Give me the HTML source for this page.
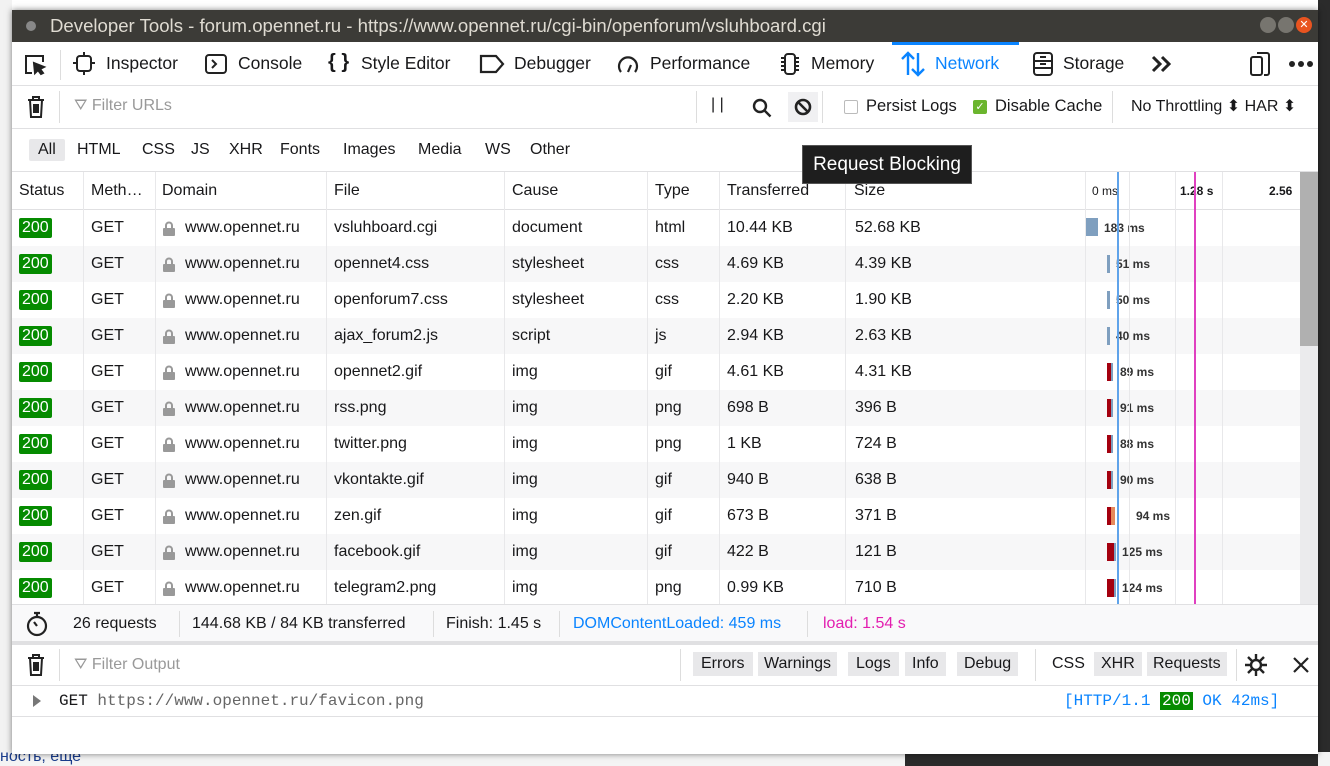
<!DOCTYPE html>
<html><head><meta charset="utf-8"><style>
*{margin:0;padding:0;box-sizing:border-box}
body{width:1330px;height:766px;overflow:hidden;position:relative;background:#fff;font-family:"Liberation Sans",sans-serif;font-size:16px;color:#18181a}
.a{position:absolute;white-space:nowrap}
.win{position:absolute;left:12px;top:10px;width:1306px;height:744px;background:#fff;overflow:hidden;box-shadow:0 0 6px rgba(0,0,0,.5)}
.title{position:absolute;left:0;top:0;width:100%;height:32px;background:#3c3b37;color:#dfdbd2;font-size:18.6px;line-height:32px;padding-left:38px}
.tb{position:absolute;left:0;top:32px;width:100%;height:44px;border-bottom:1px solid #e0e0e2}
.tb span{position:absolute;top:11px;font-size:17.5px}
.row{position:absolute;left:0;width:1288px;height:36px;line-height:36px;font-size:16px}
.row span{position:absolute}
.st{background:#058b00;color:#fff;font-family:"Liberation Sans",sans-serif;font-size:16px;line-height:20px;height:20px;padding:0 3px;border-radius:2px;top:8px}
.lock{display:inline-block;width:12px;height:15px;position:absolute;top:11px}
.ms{font-size:12px;font-weight:bold;color:#333}
.vl{position:absolute;top:0;width:1px;background:#e8e8ea}
</style></head><body>
<div class="a" style="left:0;top:0;width:12px;height:766px;background:#f2f2f2"></div>
<div class="a" style="left:1318px;top:0;width:12px;height:766px;background:#2b2b2b"></div>
<div class="a" style="left:0;top:752px;width:1330px;height:14px;background:#f4f4f4"></div>
<div class="a" style="left:0;top:748px;font-size:16px;color:#1a3c8c">ность, еще</div>
<div class="a" style="left:905px;top:752px;width:413px;height:14px;background:#2b2b2b"></div>
<div class="win">
<div class="title"><span class="a" style="left:14px;top:11px;width:10px;height:10px;border-radius:5px;background:#888"></span>Developer Tools - forum.opennet.ru - https://www.opennet.ru/cgi-bin/openforum/vsluhboard.cgi
<span class="a" style="left:1248px;top:7px;width:16px;height:16px;border-radius:8px;background:#77756f"></span>
<span class="a" style="left:1266px;top:7px;width:16px;height:16px;border-radius:8px;background:#77756f"></span>
<span class="a" style="left:1284px;top:7px;width:16px;height:16px;border-radius:8px;background:#e95420;color:#fff;font-size:11px;line-height:16px;text-align:center">✕</span></div>
<div class="tb">
<svg class="a" style="left:11px;top:11px" width="24" height="24" viewBox="0 0 24 24" fill="none" stroke="#222" stroke-width="2"><path d="M9 20H3V3h17v6"/><path d="M11 10l10 4-4 2 3 4-2 1-3-4-3 3z" fill="#222"/></svg>
<div class="a" style="left:48px;top:8px;width:1px;height:30px;background:#ddd"></div>
<svg class="a" style="left:60px;top:9px" width="24" height="26" viewBox="0 0 24 26" fill="none" stroke="#222" stroke-width="2"><rect x="5" y="5" width="14" height="15" rx="3"/><path d="M12 1v4M12 20v4M1 12h4M19 12h4"/></svg>
<span style="left:94px">Inspector</span>
<svg class="a" style="left:192px;top:11px" width="24" height="22" viewBox="0 0 24 22" fill="none" stroke="#222" stroke-width="2"><rect x="2" y="2" width="20" height="18" rx="3"/><path d="M8 7l4 4-4 4"/></svg>
<span style="left:226px">Console</span>
<span style="left:316px;top:9px;font-size:20px;font-weight:bold">{ }</span>
<span style="left:349px">Style Editor</span>
<svg class="a" style="left:467px;top:12px" width="26" height="20" viewBox="0 0 26 20" fill="none" stroke="#222" stroke-width="2.2"><path d="M2 2h15l7 8-7 8H2z"/></svg>
<span style="left:502px">Debugger</span>
<svg class="a" style="left:604px;top:10px" width="24" height="24" viewBox="0 0 24 24" fill="none" stroke="#222" stroke-width="2.2"><path d="M5 20A9 9 0 1 1 19 20"/><path d="M12 20l3-7"/></svg>
<span style="left:638px">Performance</span>
<svg class="a" style="left:766px;top:10px" width="24" height="24" viewBox="0 0 24 24" fill="none" stroke="#222" stroke-width="2"><rect x="7" y="2" width="10" height="20" rx="3"/><path d="M3 6h4M3 10h4M3 14h4M3 18h4M17 6h4M17 10h4M17 14h4M17 18h4"/></svg>
<span style="left:799px">Memory</span>
<div class="a" style="left:880px;top:0;width:127px;height:3px;background:#0a84ff"></div>
<svg class="a" style="left:888px;top:9px" width="26" height="26" viewBox="0 0 26 26" fill="none" stroke="#0a84ff" stroke-width="2.4"><path d="M8 24V2M2 8l6-6 6 6M18 2v22M12 18l6 6 6-6"/></svg>
<span style="left:923px;color:#0a84ff">Network</span>
<svg class="a" style="left:1020px;top:9px" width="22" height="26" viewBox="0 0 22 26" fill="none" stroke="#222" stroke-width="2"><rect x="2" y="2" width="18" height="22" rx="3"/><path d="M2 10h18M2 17h18M8 6h6M8 13h6"/></svg>
<span style="left:1051px">Storage</span>
<svg class="a" style="left:1138px;top:13px" width="22" height="18" viewBox="0 0 22 18" fill="none" stroke="#222" stroke-width="3"><path d="M3 2l7 7-7 7M12 2l7 7-7 7"/></svg>
<svg class="a" style="left:1236px;top:9px" width="24" height="26" viewBox="0 0 24 26" fill="none" stroke="#222" stroke-width="2"><rect x="3" y="6" width="11" height="18" rx="2"/><path d="M9 2h10a2 2 0 0 1 2 2v18a2 2 0 0 1-2 2h-3"/></svg>
<svg class="a" style="left:1276px;top:18px" width="26" height="8" viewBox="0 0 26 8" fill="#222"><circle cx="4" cy="4" r="3"/><circle cx="13" cy="4" r="3"/><circle cx="22" cy="4" r="3"/></svg>
</div>
<!-- filter bar -->
<div class="a" style="left:0;top:76px;width:100%;height:43px;border-bottom:1px solid #e0e0e2">
<svg class="a" style="left:14px;top:9px" width="20" height="24" viewBox="0 0 20 24" fill="none" stroke="#222" stroke-width="2"><path d="M2 5h16M7 5V2h6v3M4 5l1 17h10l1-17M8 9v9M10 9v9M12 9v9"/></svg>
<div class="a" style="left:47px;top:5px;width:1px;height:32px;background:#ddd"></div>
<span class="a" style="left:62px;top:11px;color:#999;font-size:16px">⛛ Filter URLs</span>
<div class="a" style="left:684px;top:5px;width:1px;height:32px;background:#ddd"></div>
<span class="a" style="left:699px;top:10px;font-size:16px">| |</span>
<svg class="a" style="left:739px;top:11px" width="22" height="22" viewBox="0 0 22 22" fill="none" stroke="#222" stroke-width="2.4"><circle cx="9" cy="9" r="6"/><path d="M13.5 13.5l6 6"/></svg>
<div class="a" style="left:776px;top:6px;width:30px;height:30px;background:#f0f0f2"></div>
<svg class="a" style="left:781px;top:11px" width="20" height="20" viewBox="0 0 20 20" fill="none" stroke="#222" stroke-width="2.6"><circle cx="10" cy="10" r="7"/><path d="M5 5l10 10"/></svg>
<div class="a" style="left:810px;top:5px;width:1px;height:32px;background:#ddd"></div>
<div class="a" style="left:832px;top:14px;width:14px;height:14px;border:1px solid #bbb;border-radius:2px"></div>
<span class="a" style="left:854px;top:11px;font-size:16.5px">Persist Logs</span>
<div class="a" style="left:961px;top:14px;width:14px;height:14px;background:#6bb52e;border-radius:2px;color:#fff;font-size:11px;line-height:14px;text-align:center">✓</div>
<span class="a" style="left:983px;top:11px;font-size:16.5px">Disable Cache</span>
<div class="a" style="left:1100px;top:5px;width:1px;height:32px;background:#ddd"></div>
<span class="a" style="left:1119px;top:10px">No Throttling ⬍ HAR ⬍</span>
</div>
<!-- type filter -->
<div class="a" style="left:0;top:119px;width:100%;height:43px;border-bottom:1px solid #e0e0e2">
<div class="a" style="left:17px;top:10px;width:36px;height:22px;background:#e8e8ea;border-radius:2px"></div>
<span class="a" style="left:26px;top:12px">All</span>
<span class="a" style="left:65px;top:12px">HTML</span>
<span class="a" style="left:130px;top:12px">CSS</span>
<span class="a" style="left:179px;top:12px">JS</span>
<span class="a" style="left:217px;top:12px">XHR</span>
<span class="a" style="left:268px;top:12px">Fonts</span>
<span class="a" style="left:331px;top:12px">Images</span>
<span class="a" style="left:406px;top:12px">Media</span>
<span class="a" style="left:473px;top:12px">WS</span>
<span class="a" style="left:518px;top:12px">Other</span>
</div>
<!-- header -->
<div class="row" style="top:162px;height:38px;line-height:38px;border-bottom:1px solid #e0e0e2">
<span style="left:7px">Status</span><span style="left:79px">Meth…</span><span style="left:150px">Domain</span><span style="left:322px">File</span><span style="left:500px">Cause</span><span style="left:643px">Type</span><span style="left:715px">Transferred</span><span style="left:842px">Size</span><span style="left:1080px;font-size:12px">0 ms</span><span style="left:1168px;font-size:12px;font-weight:bold">1.28 s</span><span style="left:1257px;font-size:12px;font-weight:bold">2.56</span>
</div>
<div id="rows"></div>
<!-- column lines -->
<div class="vl" style="left:71px;top:162px;height:432px"></div>
<div class="vl" style="left:143px;top:162px;height:432px"></div>
<div class="vl" style="left:314px;top:162px;height:432px"></div>
<div class="vl" style="left:492px;top:162px;height:432px"></div>
<div class="vl" style="left:635px;top:162px;height:432px"></div>
<div class="vl" style="left:707px;top:162px;height:432px"></div>
<div class="vl" style="left:833px;top:162px;height:432px"></div>
<div class="vl" style="left:1073px;top:162px;height:432px"></div>
<div class="vl" style="left:1117px;top:162px;height:432px"></div>
<div class="vl" style="left:1163px;top:162px;height:432px"></div>
<div class="vl" style="left:1210px;top:162px;height:432px"></div>
<div class="a" style="left:1105px;top:162px;width:2px;height:432px;background:#5fa3ea"></div>
<div class="a" style="left:1182px;top:162px;width:2px;height:432px;background:#e040c0"></div>
<div class="a" style="left:1288px;top:162px;width:18px;height:432px;background:#ebebed"></div>
<div class="a" style="left:1288px;top:162px;width:18px;height:174px;background:#b0b0b0"></div>
<!-- tooltip -->
<div class="a" style="left:790px;top:135px;width:170px;height:39px;background:#1e1e1e;border:1px solid #555;color:#fff;font-size:19px;line-height:37px;text-align:center">Request Blocking</div>
<!-- summary -->
<div class="a" style="left:0;top:594px;width:100%;height:37px;background:#f9f9fa;border-top:1px solid #e0e0e2;font-size:16px">
<svg class="a" style="left:13px;top:6px" width="24" height="26" viewBox="0 0 24 26" fill="none" stroke="#222" stroke-width="2.2"><circle cx="12" cy="15" r="9"/><path d="M9 2h6M12 2v4M12 15l-3-4"/></svg>
<span class="a" style="left:61px;top:10px">26 requests</span>
<div class="a" style="left:167px;top:6px;width:1px;height:26px;background:#ddd"></div>
<span class="a" style="left:180px;top:10px">144.68 KB / 84 KB transferred</span>
<div class="a" style="left:421px;top:6px;width:1px;height:26px;background:#ddd"></div>
<span class="a" style="left:434px;top:10px">Finish: 1.45 s</span>
<div class="a" style="left:547px;top:6px;width:1px;height:26px;background:#ddd"></div>
<span class="a" style="left:561px;top:10px;color:#0a84ff">DOMContentLoaded: 459 ms</span>
<div class="a" style="left:795px;top:6px;width:1px;height:26px;background:#ddd"></div>
<span class="a" style="left:811px;top:10px;color:#e31eb0">load: 1.54 s</span>
</div>
<div class="a" style="left:0;top:631px;width:100%;height:4px;background:#e0e0e2"></div>
<!-- console toolbar -->
<div class="a" style="left:0;top:635px;width:100%;height:41px;border-bottom:1px solid #e0e0e2;font-size:16px">
<svg class="a" style="left:14px;top:8px" width="20" height="24" viewBox="0 0 20 24" fill="none" stroke="#222" stroke-width="2"><path d="M2 5h16M7 5V2h6v3M4 5l1 17h10l1-17M8 9v9M10 9v9M12 9v9"/></svg>
<div class="a" style="left:47px;top:4px;width:1px;height:32px;background:#ddd"></div>
<span class="a" style="left:62px;top:11px;color:#999">⛛ Filter Output</span>
<div class="a" style="left:668px;top:4px;width:1px;height:32px;background:#ddd"></div>
<span class="a" style="left:681px;top:7px;background:#e8e8ea;padding:3px 8px">Errors</span>
<span class="a" style="left:746px;top:7px;background:#e8e8ea;padding:3px 6px">Warnings</span>
<span class="a" style="left:836px;top:7px;background:#e8e8ea;padding:3px 8px">Logs</span>
<span class="a" style="left:893px;top:7px;background:#e8e8ea;padding:3px 7px">Info</span>
<span class="a" style="left:945px;top:7px;background:#e8e8ea;padding:3px 7px">Debug</span>
<div class="a" style="left:1023px;top:4px;width:1px;height:32px;background:#ddd"></div>
<span class="a" style="left:1034px;top:7px;padding:3px 6px">CSS</span>
<span class="a" style="left:1082px;top:7px;background:#e8e8ea;padding:3px 7px">XHR</span>
<span class="a" style="left:1135px;top:7px;background:#e8e8ea;padding:3px 6px">Requests</span>
<div class="a" style="left:1224px;top:4px;width:1px;height:32px;background:#ddd"></div>
<svg class="a" style="left:1232px;top:8px" width="24" height="24" viewBox="0 0 24 24" fill="none" stroke="#222" stroke-width="2.4"><circle cx="12" cy="12" r="5"/><path d="M12 1v5M12 18v5M1 12h5M18 12h5M4 4l4 4M16 16l4 4M4 20l4-4M16 8l4-4"/></svg>
<svg class="a" style="left:1280px;top:11px" width="18" height="18" viewBox="0 0 18 18" stroke="#222" stroke-width="2.2"><path d="M2 2l14 14M16 2L2 16"/></svg>
</div>
<div class="a" style="left:0;top:676px;width:100%;height:31px;border-bottom:1px solid #e0e0e2;font-family:'Liberation Mono',monospace;font-size:16px;line-height:30px">
<svg class="a" style="left:20px;top:9px" width="9" height="12" viewBox="0 0 9 12"><path d="M1 0l8 6-8 6z" fill="#777"/></svg>
<span class="a" style="left:47px">GET <span style="color:#666">https://www.opennet.ru/favicon.png</span></span>
<span class="a" style="left:1052px;color:#0a84ff">[HTTP/1.1 <span style="background:#058b00;color:#fff;padding:0 2px">200</span> OK 42ms]</span>
</div>
</div>
<script>
var d=[["vsluhboard.cgi","document","html","10.44 KB","52.68 KB","183 ms"],["opennet4.css","stylesheet","css","4.69 KB","4.39 KB","51 ms"],["openforum7.css","stylesheet","css","2.20 KB","1.90 KB","50 ms"],["ajax_forum2.js","script","js","2.94 KB","2.63 KB","40 ms"],["opennet2.gif","img","gif","4.61 KB","4.31 KB","89 ms"],["rss.png","img","png","698 B","396 B","91 ms"],["twitter.png","img","png","1 KB","724 B","88 ms"],["vkontakte.gif","img","gif","940 B","638 B","90 ms"],["zen.gif","img","gif","673 B","371 B","94 ms"],["facebook.gif","img","gif","422 B","121 B","125 ms"],["telegram2.png","img","png","0.99 KB","710 B","124 ms"]];
var h="";
d.forEach(function(r,i){
var t=200+i*36,bg=i%2?"#f7f7f8":"#fff",bar;
if(i==0)bar='<span style="left:1073px;top:8px;width:13px;height:18px;background:#7f9fbf"></span>';
else if(i<4)bar='<span style="left:1095px;top:9px;width:3px;height:18px;background:#7f9fbf"></span>';
else {var w=i>=9?7:4;bar='<span style="left:1095px;top:9px;width:'+w+'px;height:18px;background:#a4000f"></span><span style="left:'+(1095+w)+'px;top:9px;width:'+(i==8?4:2)+'px;height:18px;background:'+(i==8?'#e68a5c':'#7f9fbf')+'"></span>';}
var mx=i==0?1092:(i<4?1104:(i==8?1124:(i>=9?1110:1108)));
h+='<div class="row" style="top:'+t+'px;background:'+bg+'"><span class="st" style="left:7px">200</span><span style="left:79px">GET</span><svg class="lock" style="left:151px" viewBox="0 0 12 15"><path d="M3 7V4.5a3 3 0 0 1 6 0V7" fill="none" stroke="#999" stroke-width="2"/><rect x="0" y="7" width="12" height="8" rx="1" fill="#999"/></svg><span style="left:173px">www.opennet.ru</span><span style="left:322px">'+r[0]+'</span><span style="left:500px">'+r[1]+'</span><span style="left:643px">'+r[2]+'</span><span style="left:715px">'+r[3]+'</span><span style="left:843px">'+r[4]+'</span>'+bar+'<span class="ms" style="left:'+mx+'px">'+r[5]+'</span></div>';
});
document.getElementById("rows").innerHTML=h;
</script>
</body></html>
